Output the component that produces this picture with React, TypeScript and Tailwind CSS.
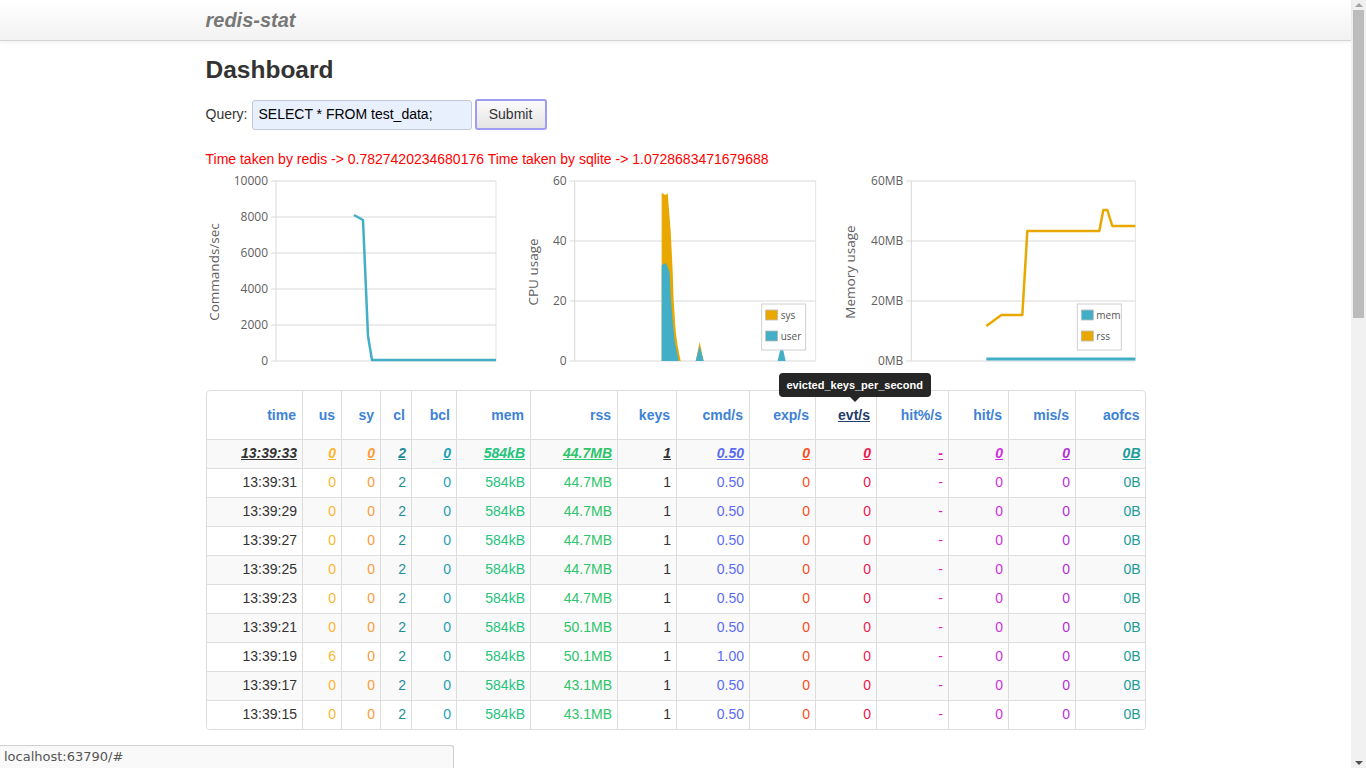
import React from 'react';

const cols = [
  { name: 'time', w: 96, color: 'text-[#333333]' },
  { name: 'us', w: 39, color: 'text-[#fbb62c]' },
  { name: 'sy', w: 39, color: 'text-[#fa9c3a]' },
  { name: 'cl', w: 31, color: 'text-[#1f8d97]' },
  { name: 'bcl', w: 45, color: 'text-[#1c9fb6]' },
  { name: 'mem', w: 74, color: 'text-[#24c47c]' },
  { name: 'rss', w: 87, color: 'text-[#2ec46a]' },
  { name: 'keys', w: 59, color: 'text-[#333333]' },
  { name: 'cmd/s', w: 73, color: 'text-[#5c6cf4]' },
  { name: 'exp/s', w: 66, color: 'text-[#fb4d1d]' },
  { name: 'evt/s', w: 61, color: 'text-[#ee1a4c]' },
  { name: 'hit%/s', w: 72, color: 'text-[#df21c4]' },
  { name: 'hit/s', w: 60, color: 'text-[#d22ee2]' },
  { name: 'mis/s', w: 67, color: 'text-[#b42fd8]' },
  { name: 'aofcs', w: 70, color: 'text-[#1a9c98]' },
];

const rows = [
  ['13:39:33', '0', '0', '2', '0', '584kB', '44.7MB', '1', '0.50', '0', '0', '-', '0', '0', '0B'],
  ['13:39:31', '0', '0', '2', '0', '584kB', '44.7MB', '1', '0.50', '0', '0', '-', '0', '0', '0B'],
  ['13:39:29', '0', '0', '2', '0', '584kB', '44.7MB', '1', '0.50', '0', '0', '-', '0', '0', '0B'],
  ['13:39:27', '0', '0', '2', '0', '584kB', '44.7MB', '1', '0.50', '0', '0', '-', '0', '0', '0B'],
  ['13:39:25', '0', '0', '2', '0', '584kB', '44.7MB', '1', '0.50', '0', '0', '-', '0', '0', '0B'],
  ['13:39:23', '0', '0', '2', '0', '584kB', '44.7MB', '1', '0.50', '0', '0', '-', '0', '0', '0B'],
  ['13:39:21', '0', '0', '2', '0', '584kB', '50.1MB', '1', '0.50', '0', '0', '-', '0', '0', '0B'],
  ['13:39:19', '6', '0', '2', '0', '584kB', '50.1MB', '1', '1.00', '0', '0', '-', '0', '0', '0B'],
  ['13:39:17', '0', '0', '2', '0', '584kB', '43.1MB', '1', '0.50', '0', '0', '-', '0', '0', '0B'],
  ['13:39:15', '0', '0', '2', '0', '584kB', '43.1MB', '1', '0.50', '0', '0', '-', '0', '0', '0B'],
];

const TEAL = '#42afc7';
const ORANGE = '#e9a800';
const chartFont = { fontFamily: '"Open Sans", sans-serif' };

// shared frame for the three graphs
const Frame = ({ x0, x1, tx, ticks, title }: { x0: number; x1: number; tx: number; ticks: string[]; title: string }) => {
  const step = 180 / (ticks.length - 1);
  return (
    <g style={chartFont}>
      {ticks.map((t, i) => {
        const y = 10 + i * step;
        return (
          <g key={t}>
            <line x1={x0 - 5} x2={x1} y1={y} y2={y} stroke="#d9d9d9" strokeWidth="1" />
            <text x={x0 - 8} y={y + 4} textAnchor="end" fontSize="12" fill="#606060">{t}</text>
          </g>
        );
      })}
      <line x1={x0} x2={x0} y1={10} y2={190} stroke="#d9d9d9" />
      <line x1={x1} x2={x1} y1={10} y2={190} stroke="#e3e3e3" />
      <text transform={`translate(${tx} 101) rotate(-90)`} textAnchor="middle" fontSize="13.5" fill="#606060">{title}</text>
    </g>
  );
};

const Legend = ({ x, items }: { x: number; items: [string, string][] }) => (
  <g style={chartFont}>
    <rect x={x} y={133} width={44} height={46} fill="#fff" stroke="#cfcfcf" />
    {items.map(([c, label], i) => (
      <g key={label}>
        <rect x={x + 4} y={139 + i * 21} width={12} height={10} fill={c} stroke="#bbb" strokeWidth="0.8" />
        <text x={x + 19} y={148 + i * 21} fontSize="10" fill="#555">{label}</text>
      </g>
    ))}
  </g>
);

const CmdChart = () => (
  <svg width="313" height="200" className="overflow-visible">
    <Frame x0={70} x1={290} tx={13} ticks={['10000', '8000', '6000', '4000', '2000', '0']} title="Commands/sec" />
    <polyline points="148,44 157,49 162,165 166,189 290,189" fill="none" stroke={TEAL} strokeWidth="2.5" strokeLinejoin="round" />
  </svg>
);

const CpuChart = () => (
  <svg width="313" height="200" className="overflow-visible">
    <g transform="translate(-9.33 0)">
      <Frame x0={65} x1={306} tx={28} ticks={['60', '40', '20', '0']} title="CPU usage" />
      <polygon points="152,190 152,22 156,24 158,22 161,60 163,100 164,130 166,160 168,175 171,190" fill={ORANGE} />
      <polygon points="152,190 152,94 156,92 158,96 160,102 161,125 163,150 165,170 169,190" fill={TEAL} />
      <polygon points="186,190 190,171 194,190" fill={ORANGE} />
      <polygon points="186,190 190,175 194,190" fill={TEAL} />
      <polygon points="268,190 272,172 276,190" fill={TEAL} />
      <Legend x={252} items={[[ORANGE, 'sys'], [TEAL, 'user']]} />
    </g>
  </svg>
);

const MemChart = () => (
  <svg width="313" height="200" className="overflow-visible">
    <g transform="translate(-2.67 0)">
      <Frame x0={82} x1={306} tx={26} ticks={['60MB', '40MB', '20MB', '0MB']} title="Memory usage" />
      <line x1={157} x2={306} y1={188} y2={188} stroke={TEAL} strokeWidth="3" />
      <polyline points="157,155 172,144 193,144 198,60 233,60 270,60 274,39 278,39 283,55 306,55" fill="none" stroke={ORANGE} strokeWidth="2.5" strokeLinejoin="round" />
      <Legend x={248} items={[[TEAL, 'mem'], [ORANGE, 'rss']]} />
    </g>
  </svg>
);

export default function App() {
  return (
    <div className="flex h-[768px] w-full overflow-hidden bg-white" style={{ fontFamily: '"Liberation Sans", Arial, sans-serif' }}>
      <div className="relative flex-1 flex flex-col">
        <div className="h-[41px] border-b border-[#d4d4d4] bg-gradient-to-b from-white to-[#f2f2f2] shadow-[0_1px_4px_rgba(0,0,0,0.07)]">
          <div className="mx-auto w-[940px] h-[40px] flex items-center">
            <span className="text-[20px] font-bold italic text-[#777777]">redis-stat</span>
          </div>
        </div>

        <div className="mx-auto w-[940px] flex flex-col">
          <h2 className="mt-[11px] text-[24.5px] leading-[36px] font-bold text-[#333333]">Dashboard</h2>

          <div className="mt-[11px] flex items-center h-[31px] text-[14px] text-[#333333]">
            <span className="mr-[4px]">Query:</span>
            <div className="w-[220px] h-[30px] flex items-center px-[6px] rounded-[3px] border border-[#c2c8d6] bg-[#e8f0fe] text-[14px] text-black">
              SELECT * FROM test_data;
            </div>
            <button className="ml-[3px] w-[72px] h-[31px] rounded-[3px] border-2 border-[#9c9cf2] bg-gradient-to-b from-[#fbfbfb] to-[#e4e4e4] text-[14px] text-[#333333]">
              Submit
            </button>
          </div>

          <p className="mt-[19px] text-[14px] leading-[20px] text-[#ff0000]">
            Time taken by redis -&gt; 0.7827420234680176 Time taken by sqlite -&gt; 1.0728683471679688
          </p>

          <div className="mt-[2px] grid grid-cols-3 h-[200px]">
            <CmdChart />
            <CpuChart />
            <MemChart />
          </div>

          <div className="relative mt-[19px]">
            <div className="rounded-[4px] border border-[#dddddd] overflow-hidden">
              <table className="w-full table-fixed border-collapse text-[14px]">
                <colgroup>
                  {cols.map((c) => (
                    <col key={c.name} style={{ width: c.w }} />
                  ))}
                </colgroup>
                <thead>
                  <tr className="h-[48px]">
                    {cols.map((c, i) => (
                      <th
                        key={c.name}
                        className={`text-right pr-[6px] pt-[2px] font-bold ${i > 0 ? 'border-l border-[#dddddd]' : ''} ${
                          c.name === 'evt/s' ? 'text-[#1f3d6b] underline' : 'text-[#3d82d6]'
                        }`}
                      >
                        {c.name}
                      </th>
                    ))}
                  </tr>
                </thead>
                <tbody>
                  {rows.map((r, ri) => (
                    <tr key={r[0]} className={`h-[29px] ${ri % 2 === 0 ? 'bg-[#f9f9f9]' : 'bg-white'}`}>
                      {r.map((v, ci) => (
                        <td
                          key={ci}
                          className={`text-right pr-[5px] border-t border-[#dddddd] ${ci > 0 ? 'border-l' : ''} ${cols[ci].color} ${
                            ri === 0 ? 'font-bold italic underline' : ''
                          }`}
                        >
                          {v}
                        </td>
                      ))}
                    </tr>
                  ))}
                </tbody>
              </table>
            </div>

            <div className="absolute left-[573px] top-[-17px] flex flex-col items-center">
              <div className="h-[24px] px-[8px] flex items-center rounded-[4px] bg-[#262626] text-[11px] font-bold text-white whitespace-nowrap">
                evicted_keys_per_second
              </div>
              <div className="w-0 h-0 border-l-[5px] border-r-[5px] border-t-[5px] border-l-transparent border-r-transparent border-t-[#262626]" />
            </div>
          </div>
        </div>

        <div className="absolute left-0 bottom-0 w-[454px] h-[23px] flex items-center pl-[4px] bg-[#f9f9f9] border-t border-r border-[#cfcfcf] rounded-tr-[3px] text-[#555555]" style={{ fontFamily: '"DejaVu Sans", sans-serif', fontSize: 13 }}>
          localhost:63790/#
        </div>
      </div>

      <div className="w-[15px] h-full bg-[#f1f1f1] flex flex-col items-center">
        <div className="h-[10px] flex items-center justify-center">
          <div className="w-0 h-0 border-l-[4px] border-r-[4px] border-b-[4px] border-l-transparent border-r-transparent border-b-[#a3a3a3]" />
        </div>
        <div className="w-[11px] h-[308px] bg-[#bcbcbc]" />
        <div className="flex-1" />
        <div className="h-[10px] flex items-center justify-center">
          <div className="w-0 h-0 border-l-[4px] border-r-[4px] border-t-[4px] border-l-transparent border-r-transparent border-t-[#505050]" />
        </div>
      </div>
    </div>
  );
}
